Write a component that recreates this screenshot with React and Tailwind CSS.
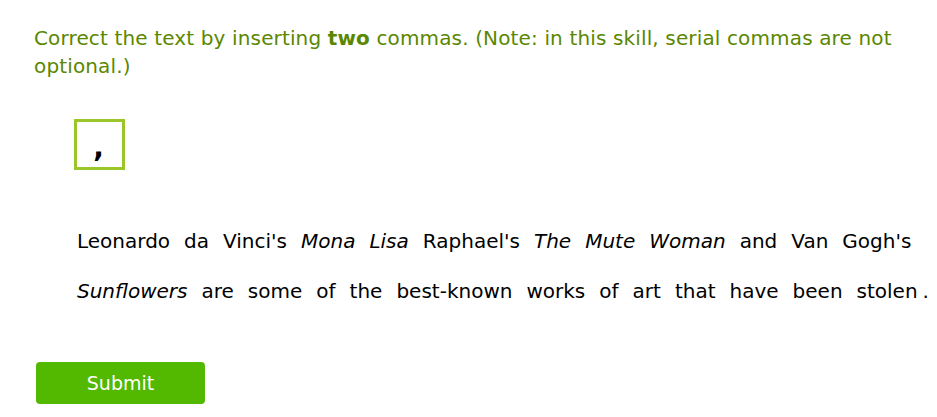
export default function App() {
  const line1 = [
    ["Leonardo"], ["da"], ["Vinci's"], ["Mona", true], ["Lisa", true], ["Raphael's"], ["The", true], ["Mute", true], ["Woman", true], ["and"], ["Van"], ["Gogh's"],
  ];
  const line2 = [
    ["Sunflowers", true], ["are"], ["some"], ["of"], ["the"], ["best-known"], ["works"], ["of"], ["art"], ["that"], ["have"], ["been"], ["stolen"],
  ];
  const Tok = ({ t, i }) => (
    <span className={i ? "italic" : ""}>{t}</span>
  );
  return (
    <div className="w-[937px] h-[417px] bg-white overflow-hidden" style={{ fontFamily: '"DejaVu Sans", Verdana, sans-serif' }}>
      <div className="pt-[24px] pl-[34px] pr-[30px] text-[20px] leading-[28px] tracking-[0.14px] text-[#5a8700]">
        Correct the text by inserting <b>two</b> commas. (Note: in this skill, serial commas are not optional.)
      </div>
      <div className="pl-[74px] pt-[39px]">
        <div className="w-[51px] h-[51px] border-[3px] border-[#9ac62a] flex items-end justify-center pb-[5px] pr-[2px] text-[28px] font-bold text-black leading-none">
          ,
        </div>
      </div>
      <div className="pl-[77px] pt-[46px] text-[20px] text-black leading-[50px]">
        <div className="flex gap-[14px] whitespace-nowrap">
          {line1.map(([t, i], k) => <Tok key={k} t={t} i={i} />)}
        </div>
        <div className="flex gap-[14px] whitespace-nowrap">
          {line2.map(([t, i], k) => <Tok key={k} t={t} i={i} />)}
          <span className="-ml-[9px]">.</span>
        </div>
      </div>
      <div className="pl-[36px] pt-[46px]">
        <button className="w-[169px] h-[42px] rounded-[4px] bg-[#52b800] text-white text-[19px]">Submit</button>
      </div>
    </div>
  );
}
